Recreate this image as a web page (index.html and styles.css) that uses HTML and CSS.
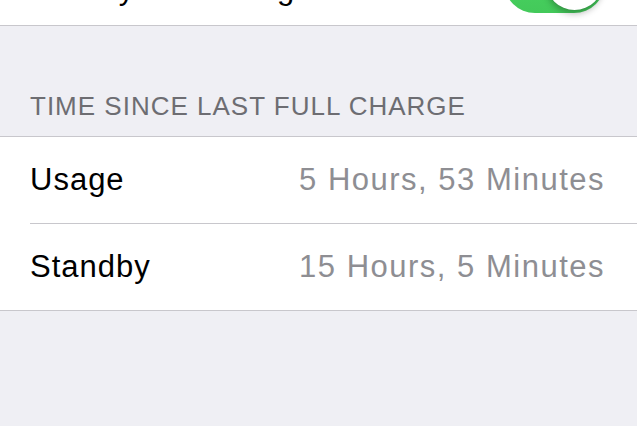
FILE: index.html
```html
<!DOCTYPE html>
<html lang="en">
<head>
    <meta charset="UTF-8">
    <meta name="viewport" content="width=device-width, initial-scale=1.0">
    <title>Battery Usage</title>
    <link rel="stylesheet" href="styles.css">
</head>
<body>

    <!-- Percentage switch -->
    <div class="group group-top">
        <div class="cell">
            <span class="label label-switch">Battery Percentage</span>
            <span class="switch on"><span class="knob"></span></span>
        </div>
    </div>

    <div class="section-header">TIME SINCE LAST FULL CHARGE</div>

    <!-- Usage times -->
    <div class="group">
        <div class="cell">
            <span class="label">Usage</span>
            <span class="value">5 Hours, 53 Minutes</span>
        </div>
        <div class="cell">
            <span class="label">Standby</span>
            <span class="value">15 Hours, 5 Minutes</span>
        </div>
    </div>

</body>
</html>
```

FILE: styles.css
```css
body {
    font-family: "Liberation Sans", Arial, sans-serif;
    margin: 0;
    background-color: #efeff4;
    overflow: hidden;
}
.group {
    background-color: #fff;
    border-top: 1px solid #c8c7cc;
    border-bottom: 1px solid #c8c7cc;
}
.group-top {
    margin-top: -61px;
    border-top: none;
}
.cell {
    display: flex;
    align-items: center;
    justify-content: space-between;
    height: 86px;
    margin-left: 30px;
    padding-right: 32px;
}
.cell + .cell {
    border-top: 1px solid #c8c7cc;
}
.label {
    font-size: 31px;
    letter-spacing: 1px;
    color: #000;
}
.label-switch {
    padding-top: 13px;
}
.value {
    font-size: 31px;
    letter-spacing: 1.5px;
    color: #8e8e93;
}
.section-header {
    padding: 65px 0 15px 30px;
    font-size: 26px;
    line-height: 30px;
    letter-spacing: 1px;
    color: #6d6d72;
}
.switch {
    position: relative;
    width: 101px;
    height: 62px;
    border-radius: 31px;
    background-color: #e5e5ea;
}
.switch.on {
    background: linear-gradient(#4cd964, #43c95a);
}
.knob {
    position: absolute;
    top: 2px;
    right: 2px;
    width: 57px;
    height: 57px;
    border-radius: 50%;
    background-color: #fff;
    box-shadow: 0 4px 6px rgba(0, 0, 0, 0.25), 0 0 1px rgba(0, 0, 0, 0.2);
}
```
